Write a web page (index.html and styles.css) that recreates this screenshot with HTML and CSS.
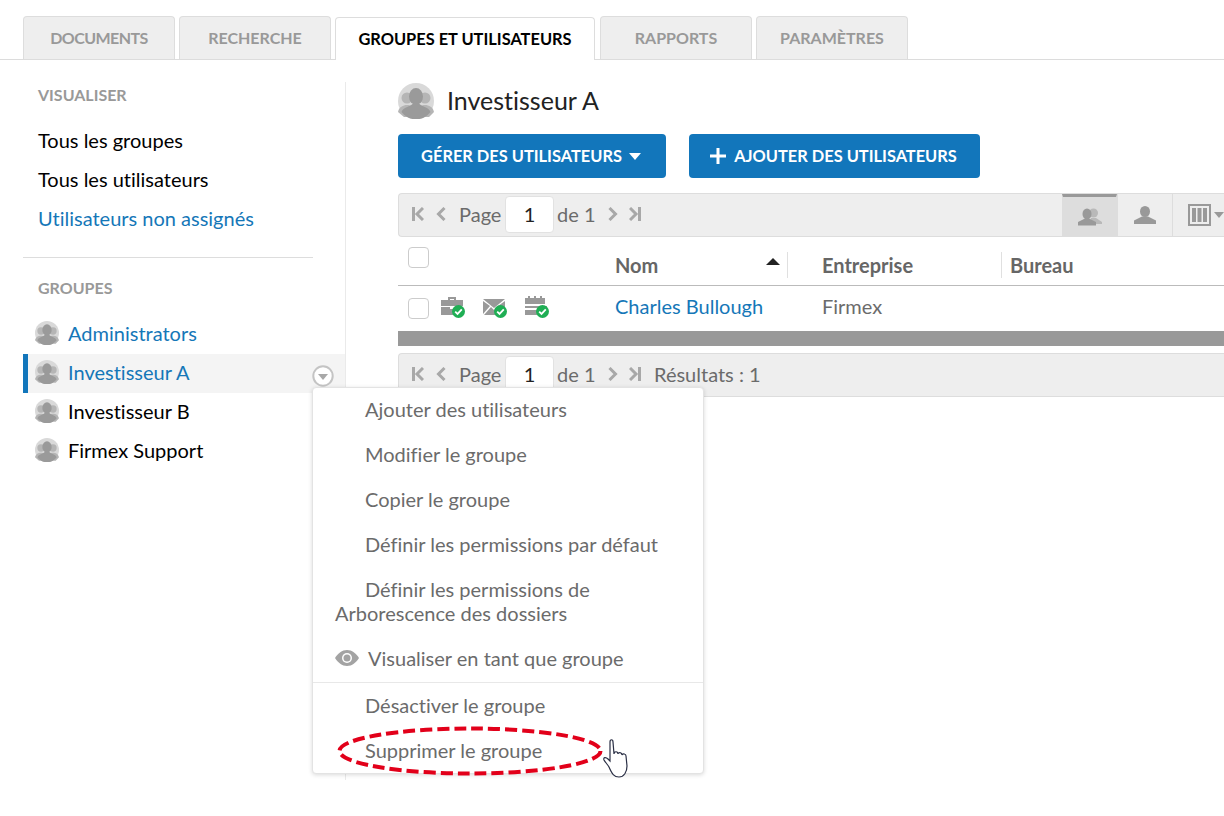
FILE: index.html
```html
<!DOCTYPE html>
<html lang="fr">
<head>
<meta charset="utf-8">
<title>Groupes et utilisateurs</title>
<link rel="stylesheet" href="styles.css">
</head>
<body>
<svg class="defs" width="0" height="0" aria-hidden="true">
  <defs>
    <symbol id="avatar" viewBox="0 0 36 36">
      <circle cx="18" cy="18" r="18" fill="#d9d9d9"/>
      <g fill="#b5b5b5">
        <circle cx="9" cy="15" r="5.500"/><circle cx="27" cy="15" r="5.500"/>
        <path d="M0 29c1-5 5-7 9-7s8 2 9 7l-4 5H6zM18 29c1-5 5-7 9-7s8 2 9 7l-5 5H22z"/>
      </g>
      <g fill="#9a9a9a">
        <ellipse cx="18" cy="13.500" rx="7" ry="8.500"/>
        <path d="M3.500 29c2-5 8-5 11-8h7c3 3 9 3 11 8a18 18 0 0 1-29 0z"/>
      </g>
    </symbol>
    <symbol id="check" viewBox="0 0 13 13">
      <circle cx="6.500" cy="6.500" r="6.500" fill="#1fae54"/>
      <path d="M3.200 6.600l2.300 2.300 4.300-4.600" fill="none" stroke="#fff" stroke-width="1.800"/>
    </symbol>
    <symbol id="pager-first" viewBox="0 0 12 14"><path d="M0 0h3v14H0z" fill="#a8a8a8"/><path d="M11 1L5 7l6 6" fill="none" stroke="#a8a8a8" stroke-width="3"/></symbol>
    <symbol id="pager-prev" viewBox="0 0 10 14"><path d="M8.500 1L2.500 7l6 6" fill="none" stroke="#a8a8a8" stroke-width="3"/></symbol>
    <symbol id="pager-next" viewBox="0 0 10 14"><path d="M1.500 1l6 6-6 6" fill="none" stroke="#a8a8a8" stroke-width="3"/></symbol>
    <symbol id="pager-last" viewBox="0 0 12 14"><path d="M9 0h3v14H9z" fill="#a8a8a8"/><path d="M1 1l6 6-6 6" fill="none" stroke="#a8a8a8" stroke-width="3"/></symbol>
  </defs>
</svg>

<nav class="tabs">
  <a class="tab tab-a tab-docs">DOCUMENTS</a>
  <a class="tab tab-a">RECHERCHE</a>
  <a class="tab tab-active">GROUPES ET UTILISATEURS</a>
  <a class="tab tab-a tab-gap">RAPPORTS</a>
  <a class="tab tab-a">PARAMÈTRES</a>
</nav>

<div class="layout">
  <aside class="sidebar">
    <h3 class="side-title">VISUALISER</h3>
    <ul class="side-links">
      <li>Tous les groupes</li>
      <li>Tous les utilisateurs</li>
      <li class="link">Utilisateurs non assignés</li>
    </ul>
    <hr class="side-rule">
    <h3 class="side-title side-title-groups">GROUPES</h3>
    <ul class="groups">
      <li class="group link"><svg class="g-avatar"><use href="#avatar"/></svg>Administrators</li>
      <li class="group link group-active"><svg class="g-avatar"><use href="#avatar"/></svg>Investisseur A
        <svg class="g-menu" viewBox="0 0 22 22"><circle cx="11" cy="11" r="9.700" fill="#fff" stroke="#c4c4c4" stroke-width="2"/><path d="M6 9h10l-5 6z" fill="#a8a8a8"/></svg>
      </li>
      <li class="group"><svg class="g-avatar"><use href="#avatar"/></svg>Investisseur B</li>
      <li class="group"><svg class="g-avatar"><use href="#avatar"/></svg>Firmex Support</li>
    </ul>
  </aside>

  <main class="main">
    <div class="title-row">
      <svg class="title-avatar"><use href="#avatar"/></svg>
      <h1 class="title">Investisseur A</h1>
    </div>
    <div class="actions">
      <button class="btn btn-manage">GÉRER DES UTILISATEURS<span class="caret"></span></button>
      <button class="btn btn-add"><svg class="plus" viewBox="0 0 16 16"><path d="M6.500 0h3v6.500H16v3H9.500V16h-3V9.500H0v-3h6.500z" fill="#fff"/></svg>AJOUTER DES UTILISATEURS</button>
    </div>

    <div class="pager">
      <svg class="p-first"><use href="#pager-first"/></svg>
      <svg class="p-prev"><use href="#pager-prev"/></svg>
      <span class="p-label">Page</span>
      <span class="p-input">1</span>
      <span class="p-of">de 1</span>
      <svg class="p-next"><use href="#pager-next"/></svg>
      <svg class="p-last"><use href="#pager-last"/></svg>
      <div class="views">
        <span class="view view-on">
          <svg width="24" height="18" viewBox="0 0 24 18"><g fill="#b9b9b9"><circle cx="15.500" cy="5" r="4.500"/><path d="M13 10h5l6 4v2H11z"/></g><g fill="#999"><ellipse cx="9" cy="6" rx="4.500" ry="5.500"/><path d="M6 11h6l6 3v3.500H0V14z"/></g></svg>
        </span>
        <span class="view">
          <svg width="22" height="18" viewBox="0 0 22 18"><g fill="#999"><ellipse cx="11" cy="5.500" rx="5" ry="5.500"/><path d="M8 10.500h6l8 4V18H0v-3.500z"/></g></svg>
        </span>
        <span class="view view-cols">
          <svg width="23" height="22" viewBox="0 0 23 22"><path d="M1 1h21v20H1z" fill="none" stroke="#999" stroke-width="2"/><path d="M4 4h4v14H4zM9.500 4h4v14h-4zM15 4h4v14h-4z" fill="#999"/></svg>
          <span class="cols-caret"></span>
        </span>
      </div>
    </div>

    <div class="thead">
      <span class="cell-check"><span class="checkbox"></span></span>
      <span class="th th-name">Nom<span class="sort"></span></span>
      <span class="th th-company">Entreprise</span>
      <span class="th th-office">Bureau</span>
    </div>
    <div class="trow">
      <span class="cell-check row-check">
        <span class="checkbox"></span>
        <span class="status">
          <svg class="s-icon" viewBox="0 0 22 20"><path d="M7 4V1h8v3h-2V3H9v1zM0 4h22v6H0zM0 11h9v2h4v-2h9v8H0z" fill="#999"/></svg>
          <svg class="s-check"><use href="#check"/></svg>
        </span>
        <span class="status">
          <svg class="s-icon" viewBox="0 0 22 20"><path d="M0 3h22L11 12zM0 5v13l7-8zM22 5v13l-7-8zM8 11l3 3 3-3 7 8H1z" fill="#999"/></svg>
          <svg class="s-check"><use href="#check"/></svg>
        </span>
        <span class="status">
          <svg class="s-icon" viewBox="0 0 22 20"><path d="M0 2h3V0h2v2h4V0h2v2h4V0h2v2h3v6H0zM0 10h22v2H0zM0 14h22v5H0z" fill="#999"/></svg>
          <svg class="s-check"><use href="#check"/></svg>
        </span>
      </span>
      <span class="td-name link">Charles Bullough</span>
      <span class="td-company">Firmex</span>
    </div>
    <div class="scrollbar"></div>
    <div class="pager">
      <svg class="p-first"><use href="#pager-first"/></svg>
      <svg class="p-prev"><use href="#pager-prev"/></svg>
      <span class="p-label">Page</span>
      <span class="p-input">1</span>
      <span class="p-of">de 1</span>
      <svg class="p-next"><use href="#pager-next"/></svg>
      <svg class="p-last"><use href="#pager-last"/></svg>
      <span class="p-results">Résultats : 1</span>
    </div>
  </main>
</div>

<ul class="menu">
  <li class="m-item">Ajouter des utilisateurs</li>
  <li class="m-item">Modifier le groupe</li>
  <li class="m-item">Copier le groupe</li>
  <li class="m-item">Définir les permissions par défaut</li>
  <li class="m-item">Définir les permissions de<br>Arborescence des dossiers</li>
  <li class="m-item m-eye"><svg class="eye" viewBox="0 0 24 16"><path d="M12 0c5 0 9 3.500 12 8-3 4.500-7 8-12 8S3 12.500 0 8c3-4.500 7-8 12-8z" fill="#a3a3a3"/><circle cx="12" cy="8" r="5" fill="#fff"/><circle cx="12" cy="8" r="3.500" fill="#a3a3a3"/></svg>Visualiser en tant que groupe</li>
  <li class="m-divider"></li>
  <li class="m-item">Désactiver le groupe</li>
  <li class="m-item">Supprimer le groupe</li>
</ul>

<svg class="annotation" viewBox="0 0 300 60">
  <ellipse cx="132" cy="30" rx="130.500" ry="22.500" fill="none" stroke="#e2001a" stroke-width="4" stroke-dasharray="12 5"/>
  <path transform="translate(3 0)" d="M268 46c-1-2-4-5-5-7-1-3 2-3 4-1l2 2 0-19c0-3 3-3 3 0l1 12c0-3 4-3 4 0 0-2 4-2 4 1 1-2 4-1 4 1l1 10c0 6-3 11-8 11-5 0-7-3-10-10z" fill="#fff" stroke="#2a2f45" stroke-width="1.200"/>
</svg>
</body>
</html>
```
FILE: styles.css
```css
* { box-sizing: border-box; }
html, body { margin: 0; padding: 0; }
body {
  width: 1224px;
  height: 816px;
  overflow: hidden;
  position: relative;
  background: #fff;
  font-family: "Lato", "Liberation Sans", sans-serif;
  font-size: 20px;
  font-variant-ligatures: none;
  color: #000;
}
ul { list-style: none; margin: 0; padding: 0; }
.defs { position: absolute; }
.link { color: #1577b8; }

.tabs {
  height: 60px;
  padding: 16px 0 0 23px;
  display: flex;
  gap: 4px;
  align-items: flex-end;
  border-bottom: 1px solid #dcdcdc;
}
.tab {
  height: 43px;
  display: flex;
  align-items: center;
  justify-content: center;
  padding-bottom: 2px;
  font-size: 16px;
  font-weight: 700;
  border-radius: 4px 4px 0 0;
}
.tab-a {
  width: 152px;
  background: #eee;
  color: #999;
  border: 1px solid #ddd;
  border-bottom: 0;
}
.tab-docs { letter-spacing: -.55px; }
.tab-active {
  width: 260px;
  margin-bottom: -1px;
  font-size: 16.400px;
  background: #fff;
  color: #000;
  border: 1px solid #ddd;
  border-bottom: 0;
}
.tab-gap { margin-left: 1px; }

.layout { display: flex; padding: 22px 0 0 23px; }
.sidebar {
  width: 323px;
  height: 698px;
  border-right: 1px solid #eaeaea;
  flex: none;
}
.side-title {
  margin: 0 0 0 15px;
  font-size: 16px;
  line-height: 26px;
  font-weight: 700;
  color: #999;
}
.side-links { margin: 13px 0 0 15px; }
.side-links li { height: 39px; line-height: 39px; }
.side-rule {
  margin: 19px 32px 0 0;
  border: 0;
  border-top: 1px solid #ddd;
}
.side-title-groups { margin-top: 17px; }
.groups { margin-top: 14px; }
.group {
  position: relative;
  height: 39px;
  display: flex;
  align-items: center;
  padding: 0 0 4px 12px;
}
.g-avatar { width: 24px; height: 24px; margin-right: 9px; flex: none; }
.group-active {
  background: #f4f4f4;
  box-shadow: inset 5px 0 0 #1276bb;
}
.g-menu { position: absolute; right: 11px; top: 11px; width: 22px; height: 22px; }

.main { padding-left: 52px; width: 878px; flex: none; }
.title-row { display: flex; align-items: center; height: 36px; margin-top: 1px; }
.title-avatar { width: 36px; height: 36px; margin-right: 13px; }
.title { margin: -3px 0 0; font-size: 25px; font-weight: 400; color: #222; }
.actions { display: flex; gap: 23px; margin-top: 15px; }
.btn {
  height: 44px;
  border: 0;
  border-radius: 4px;
  background: #1276bb;
  color: #fff;
  font: 700 16.400px "Lato", "Liberation Sans", sans-serif;
  display: flex;
  align-items: center;
  justify-content: center;
  padding: 0 2px 2px 0;
}
.btn-manage { width: 268px; }
.btn-add { width: 291px; }
.caret {
  margin: 2px 0 0 7px;
  border: 6px solid transparent;
  border-top: 7px solid #fff;
  border-bottom: 0;
}
.plus { width: 16px; height: 16px; margin: 2px 8px 0 0; }

.pager {
  height: 44px;
  margin-top: 15px;
  padding: 0 0 2px 13px;
  display: flex;
  align-items: center;
  background: #eee;
  border: 1px solid #ddd;
  border-right: 0;
  border-radius: 4px 0 0 4px;
  color: #6b6b6b;
}
.pager svg { flex: none; }
.p-first { width: 12px; height: 14px; margin-right: 12px; }
.p-prev { width: 10px; height: 14px; margin-right: 13px; }
.p-label { width: 46px; }
.p-input {
  width: 49px;
  height: 37px;
  line-height: 35px;
  text-align: center;
  background: #fff;
  border: 1px solid #e2e2e2;
  border-radius: 4px;
  color: #222;
}
.p-of { margin-left: 3px; width: 51px; }
.p-next { width: 10px; height: 14px; margin-right: 11px; }
.p-last { width: 12px; height: 14px; margin-right: 13px; }
.p-results { color: #6b6b6b; }
.views { margin: 0 0 -2px auto; display: flex; height: 42px; }
.view {
  width: 55px;
  display: flex;
  align-items: center;
  justify-content: center;
  border-left: 1px solid #ddd;
}
.view-on {
  background: #ddd;
  border-top: 3px solid #999;
  border-right: 1px solid #ddd;
}
.view-cols { width: 52px; justify-content: flex-start; padding-left: 15px; }
.cols-caret {
  margin-left: 3px;
  border: 5px solid transparent;
  border-top: 6px solid #999;
  border-bottom: 0;
}

.thead {
  height: 49px;
  display: flex;
  align-items: center;
  border-bottom: 1px solid #bbb;
  font-weight: 700;
  color: #666;
}
.cell-check { width: 217px; flex: none; padding-left: 10px; display: flex; align-items: center; }
.checkbox {
  width: 21px;
  height: 21px;
  border: 1px solid #ccc;
  border-radius: 4px;
  background: #fff;
  flex: none;
}
.thead .checkbox { margin-top: -7px; }
.th { height: 26px; line-height: 26px; margin-top: 8px; }
.th-name { width: 173px; position: relative; border-right: 1px solid #e0e0e0; }
.sort {
  position: absolute;
  right: 7px;
  top: 6px;
  border: 7px solid transparent;
  border-bottom: 7px solid #222;
  border-top: 0;
}
.th-company { width: 214px; padding-left: 34px; border-right: 1px solid #e0e0e0; }
.th-office { padding-left: 8px; }
.trow { height: 45px; display: flex; align-items: center; color: #6b6b6b; padding-bottom: 5px; }
.row-check .checkbox { margin: 5px 12px 0 0; }
.status { position: relative; width: 22px; height: 20px; margin-right: 20px; flex: none; }
.s-icon { display: block; width: 22px; height: 20px; }
.s-check { position: absolute; right: -2px; bottom: -2px; width: 13px; height: 13px; }
.td-name { width: 207px; }
.scrollbar { height: 15px; background: #999; }
.scrollbar + .pager { margin-top: 7px; }

.menu {
  position: absolute;
  left: 312px;
  top: 387px;
  width: 392px;
  height: 387px;
  padding-top: 9px;
  display: flex;
  flex-direction: column;
  background: #fff;
  border: 1px solid #e3e3e3;
  border-radius: 4px;
  box-shadow: 0 1px 4px rgba(0,0,0,.15);
  color: #6b6b6b;
}
.m-item {
  padding: 0 10px 0 22px;
  text-indent: 30px;
  line-height: 24px;
  margin-bottom: 21px;
  flex: none;
}
.m-eye { text-indent: 0; display: flex; align-items: center; margin-bottom: 12px; }
.eye { width: 24px; height: 16px; margin-right: 9px; margin-top: -1px; }
.m-divider { height: 1px; background: #e8e8e8; margin-bottom: 10px; flex: none; }

.annotation {
  position: absolute;
  left: 338px;
  top: 721px;
  width: 300px;
  height: 60px;
  overflow: visible;
}
```
